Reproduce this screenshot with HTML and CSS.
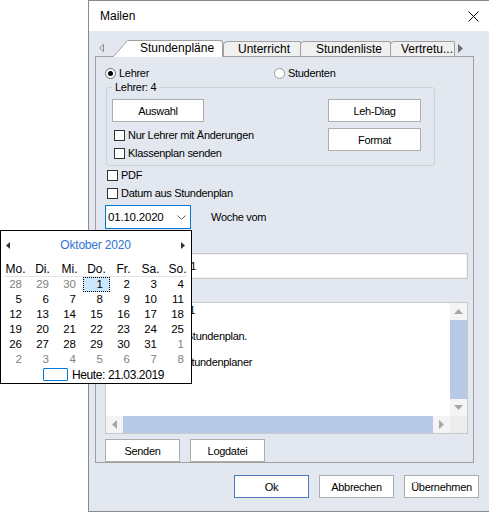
FILE: index.html
```html
<!DOCTYPE html>
<html lang="de">
<head>
<meta charset="utf-8">
<title>Mailen</title>
<link rel="stylesheet" href="styles.css">
</head>
<body>
<div class="window">
  <div class="titlebar">
    <span class="title">Mailen</span>
    <svg class="close" width="11" height="11" viewBox="0 0 11 11"><path d="M0.5 0.5 L10.5 10.5 M10.5 0.5 L0.5 10.5" stroke="#000" stroke-width="1" fill="none"/></svg>
  </div>
  <div class="client">
    <div class="tabs">
      <div class="tab-scroll-left"><svg width="5" height="8" viewBox="0 0 5 8"><polygon points="4.5,0.5 4.5,7.5 0.8,4" fill="none" stroke="#8a8a8a" stroke-width="1"/></svg></div>
      <div class="tab-active">
        <svg class="tab-slant" width="15" height="17" viewBox="0 0 15 17"><polygon points="0,17 14.5,0.5 15,0.5 15,17" fill="#fff"/><line x1="0.5" y1="16.5" x2="14.5" y2="0.5" stroke="#a0a0a0" stroke-width="1"/></svg>
        <div class="tab-active-body">Stundenpläne</div>
      </div>
      <div class="tab tab-unterricht">Unterricht</div>
      <div class="tab tab-liste">Stundenliste</div>
      <div class="tab tab-vert">Vertretu...</div>
      <div class="tab-scroll-right"><svg width="5" height="9" viewBox="0 0 5 9"><polygon points="0,0 5,4.5 0,9" fill="#6e6e6e"/></svg></div>
    </div>
    <div class="panel">
      <div class="radio-row">
        <div class="radio radio-lehrer"><span class="radio-dot on"></span><span>Lehrer</span></div>
        <div class="radio"><span class="radio-dot"></span><span>Studenten</span></div>
      </div>
      <fieldset class="group">
        <legend>Lehrer: 4</legend>
        <div class="group-body">
          <div class="group-left">
            <div class="btn btn-auswahl">Auswahl</div>
            <div class="check-row in-group first"><span class="check"></span><span>Nur Lehrer mit Änderungen</span></div>
            <div class="check-row in-group"><span class="check"></span><span>Klassenplan senden</span></div>
          </div>
          <div class="group-right">
            <div class="btn btn-side">Leh-Diag</div>
            <div class="btn btn-side">Format</div>
          </div>
        </div>
      </fieldset>
      <div class="check-row outer"><span class="check"></span><span>PDF</span></div>
      <div class="check-row outer"><span class="check"></span><span>Datum aus Stundenplan</span></div>
      <div class="date-row">
        <div class="date-picker">
          <span>01.10.2020</span>
          <svg width="9" height="5" viewBox="0 0 9 5"><polyline points="0.5,0.5 4.5,4.5 8.5,0.5" fill="none" stroke="#5a5a5a" stroke-width="1"/></svg>
        </div>
        <span class="date-label">Woche vom</span>
      </div>
      <div class="field-label">Betreff:</div>
      <div class="field">Stundenplan für %1</div>
      <div class="field-label label-text">Text:</div>
      <div class="memo">
        <div class="memo-text"><span class="line-first">Sehr geehrte(r) %1</span>

hier ist Ihr neuer Stundenplan.

Viele Grüße, Ihr Stundenplaner</div>
        <div class="vscroll">
          <div class="sb-btn"><svg width="9" height="5" viewBox="0 0 9 5"><polygon points="0,5 4.5,0 9,5" fill="#a6a6a6"/></svg></div>
          <div class="sb-thumb"></div>
          <div class="sb-btn"><svg width="9" height="5" viewBox="0 0 9 5"><polygon points="0,0 4.5,5 9,0" fill="#a6a6a6"/></svg></div>
        </div>
        <div class="hscroll">
          <div class="sb-btn"><svg width="5" height="9" viewBox="0 0 5 9"><polygon points="5,0 0,4.5 5,9" fill="#a6a6a6"/></svg></div>
          <div class="sb-thumb"></div>
          <div class="sb-btn"><svg width="5" height="9" viewBox="0 0 5 9"><polygon points="0,0 5,4.5 0,9" fill="#a6a6a6"/></svg></div>
        </div>
        <div class="sb-corner"></div>
      </div>
      <div class="panel-buttons">
        <div class="btn btn-75">Senden</div>
        <div class="btn btn-75">Logdatei</div>
      </div>
    </div>
    <div class="dialog-buttons">
      <div class="btn btn-75 btn-default">Ok</div>
      <div class="btn btn-75">Abbrechen</div>
      <div class="btn btn-75">Übernehmen</div>
    </div>
  </div>
</div>

<div class="calendar">
  <div class="cal-head">
    <svg width="4" height="7" viewBox="0 0 4 7"><polygon points="4,0 0,3.5 4,7" fill="#333"/></svg>
    <span class="cal-title">Oktober 2020</span>
    <svg width="4" height="7" viewBox="0 0 4 7"><polygon points="0,0 4,3.5 0,7" fill="#333"/></svg>
  </div>
  <div class="cal-dow">
    <span>Mo.</span><span>Di.</span><span>Mi.</span><span>Do.</span><span>Fr.</span><span>Sa.</span><span>So.</span>
  </div>
  <div class="cal-sep"></div>
  <div class="cal-days">
    <span class="other">28</span><span class="other">29</span><span class="other">30</span><span class="sel">1</span><span>2</span><span>3</span><span>4</span>
    <span>5</span><span>6</span><span>7</span><span>8</span><span>9</span><span>10</span><span>11</span>
    <span>12</span><span>13</span><span>14</span><span>15</span><span>16</span><span>17</span><span>18</span>
    <span>19</span><span>20</span><span>21</span><span>22</span><span>23</span><span>24</span><span>25</span>
    <span>26</span><span>27</span><span>28</span><span>29</span><span>30</span><span>31</span><span class="other">1</span>
    <span class="other">2</span><span class="other">3</span><span class="other">4</span><span class="other">5</span><span class="other">6</span><span class="other">7</span><span class="other">8</span>
  </div>
  <div class="cal-today">
    <span class="today-box"></span>
    <span class="today-text">Heute: 21.03.2019</span>
  </div>
</div>
</body>
</html>
```

FILE: styles.css
```css
html, body {
  margin: 0;
  padding: 0;
}

body {
  width: 489px;
  height: 513px;
  overflow: hidden;
  position: relative;
  background: #ffffff;
  font-family: "Liberation Sans", Arial, sans-serif;
  font-size: 11px;
  color: #000;
  letter-spacing: -0.3px;
}

.window {
  margin-left: 88px;
  width: 401px;
  height: 512px;
  box-sizing: border-box;
  border: 1px solid #8a8a8a;
  border-right: none;
  display: flex;
  flex-direction: column;
}

.titlebar {
  height: 30px;
  flex: none;
  background: #fff;
  display: flex;
  align-items: center;
  justify-content: space-between;
  padding: 0 10px 0 11px;
  font-size: 12px;
  letter-spacing: 0;
}

.close {
  display: block;
}

.client {
  flex: 1;
  background: #e3e8f0;
  padding: 9px 10px 9px 6px;
  display: flex;
  flex-direction: column;
}

/* Tabs */
.tabs {
  height: 16px;
  flex: none;
  display: flex;
  align-items: flex-end;
  font-size: 12px;
  letter-spacing: 0;
}

.tab-scroll-left {
  width: 18px;
  height: 16px;
  box-sizing: border-box;
  padding-left: 4px;
  display: flex;
  align-items: center;
}

.tab-scroll-left svg,
.tab-scroll-right svg {
  display: block;
}

.tab-active {
  display: flex;
  height: 17px;
  margin-bottom: -1px;
  position: relative;
  z-index: 1;
}

.tab-slant {
  display: block;
}

.tab-active-body {
  width: 95px;
  box-sizing: border-box;
  background: #fff;
  border-top: 1px solid #a0a0a0;
  border-right: 1px solid #a0a0a0;
  border-top-right-radius: 3px;
  padding-left: 12px;
  line-height: 15px;
}

.tab {
  height: 15px;
  box-sizing: border-box;
  border: 1px solid #a0a0a0;
  border-bottom: none;
  border-top-left-radius: 5px 4px;
  border-top-right-radius: 2px;
  background: #f0f0f0;
  line-height: 14px;
  white-space: nowrap;
  overflow: hidden;
}

.tab-unterricht {
  width: 78px;
  padding-left: 14px;
}

.tab-liste {
  width: 91px;
  margin-left: -1px;
  padding-left: 15px;
}

.tab-vert {
  width: 65px;
  margin-left: -1px;
  padding-left: 10px;
}

.tab-scroll-right {
  margin-left: 3px;
  height: 16px;
  display: flex;
  align-items: center;
}

/* Panel */
.panel {
  width: 379px;
  box-sizing: border-box;
  border: 1px solid #a0a0a0;
  display: flex;
  flex-direction: column;
  align-items: flex-start;
}

.radio-row {
  margin: 8px 0 0 9px;
  height: 16px;
  display: flex;
  align-items: center;
}

.radio {
  display: flex;
  align-items: center;
  gap: 3px;
}

.radio-lehrer {
  width: 169px;
}

.radio-dot {
  width: 11px;
  height: 11px;
  box-sizing: border-box;
  border-radius: 50%;
  border: 1px solid #9a9a9a;
  background: #fff;
  display: flex;
  align-items: center;
  justify-content: center;
}

.radio-dot.on {
  border-color: #6a6a6a;
}

.radio-dot.on::after {
  content: "";
  width: 5px;
  height: 5px;
  border-radius: 50%;
  background: #000;
}

.group {
  margin: 0 0 0 10px;
  width: 329px;
  min-width: 0;
  box-sizing: border-box;
  border: 1px solid #cdd2d9;
  border-radius: 3px;
  padding: 5px 13px 3px 5px;
}

.group legend {
  padding: 0 3px;
  line-height: 13px;
}

.group-body {
  display: flex;
  justify-content: space-between;
}

.group-right {
  display: flex;
  flex-direction: column;
  gap: 6px;
}

.btn {
  box-sizing: border-box;
  height: 23px;
  border: 1px solid #adadad;
  background: #fff;
  display: flex;
  align-items: center;
  justify-content: center;
  white-space: nowrap;
}

.btn-auswahl {
  width: 92px;
}

.btn-side {
  width: 93px;
}

.btn-75 {
  width: 75px;
}

.btn-default {
  border-color: #4d79b9;
}

.check-row {
  height: 18px;
  display: flex;
  align-items: center;
  gap: 3px;
  white-space: nowrap;
}

.check-row.in-group {
  margin-left: 2px;
}

.check-row.first {
  margin-top: 4px;
}

.check-row.outer {
  margin-left: 11px;
}

.check {
  width: 11px;
  height: 11px;
  box-sizing: border-box;
  border: 1px solid #333;
  background: #fff;
  flex: none;
}

.date-row {
  margin: 3px 0 0 9px;
  display: flex;
  align-items: center;
}

.date-picker {
  width: 86px;
  height: 24px;
  box-sizing: border-box;
  border: 1px solid #0078d7;
  background: #fff;
  display: flex;
  align-items: center;
  justify-content: space-between;
  padding: 0 4px 0 2px;
  font-size: 11.5px;
  letter-spacing: -0.2px;
}

.date-picker svg {
  display: block;
}

.date-label {
  margin-left: 20px;
}

.field-label {
  margin: 6px 0 0 9px;
  height: 14px;
  line-height: 14px;
}

.field {
  margin: 4px 0 0 9px;
  width: 363px;
  height: 26px;
  box-sizing: border-box;
  border: 1px solid #c9c9c9;
  box-shadow: inset 0 0 0 1px #f2f2f2;
  background: #fff;
  padding: 0 3px;
  line-height: 24px;
  white-space: nowrap;
  letter-spacing: -0.55px;
}

.memo {
  margin: 3px 0 0 9px;
  width: 363px;
  height: 132px;
  box-sizing: border-box;
  border: 1px solid #c9c9c9;
  background: #fff;
  display: grid;
  grid-template-columns: 1fr 17px;
  grid-template-rows: 1fr 17px;
}

.memo-text {
  padding: 1px 3px;
  line-height: 13px;
  white-space: pre;
  overflow: hidden;
}

.line-first {
  letter-spacing: -0.42px;
}

.vscroll {
  display: grid;
  grid-template-rows: 17px 1fr 17px;
  background: #f0f0f0;
}

.hscroll {
  display: grid;
  grid-template-columns: 17px 1fr 17px;
  background: #f0f0f0;
}

.sb-btn {
  display: flex;
  align-items: center;
  justify-content: center;
  background: #f4f4f4;
}

.sb-btn svg {
  display: block;
}

.sb-thumb {
  background: #b7c9e6;
}

.sb-corner {
  background: #ececee;
}

.panel-buttons {
  margin: 5px 0 0 9px;
  display: flex;
  gap: 10px;
}

.dialog-buttons {
  margin-top: 12px;
  display: flex;
  justify-content: flex-end;
  gap: 10px;
}

/* Calendar popup */
.calendar {
  position: absolute;
  left: 0;
  top: 230px;
  width: 192px;
  height: 154px;
  box-sizing: border-box;
  border: 1px solid #000;
  background: #fff;
  font-size: 12px;
  letter-spacing: 0;
  display: flex;
  flex-direction: column;
}

.cal-head {
  margin-top: 6px;
  height: 16px;
  padding: 0 6px 0 5px;
  display: flex;
  align-items: center;
  justify-content: space-between;
}

.cal-head svg {
  display: block;
}

.cal-title {
  color: #2f74d6;
  letter-spacing: -0.2px;
}

.cal-dow {
  margin: 9px 0 0 1px;
  height: 14px;
  line-height: 14px;
  display: grid;
  grid-template-columns: repeat(7, 27px);
}

.cal-dow span {
  text-align: center;
}

.cal-sep {
  height: 1px;
  margin: 0 5px 0 3px;
  background: #e4e4e4;
}

.cal-days {
  margin-left: 1px;
  display: grid;
  grid-template-columns: repeat(7, 27px);
  grid-auto-rows: 15px;
  font-size: 11.5px;
  line-height: 15px;
}

.cal-days span {
  text-align: right;
  padding-right: 7px;
  box-sizing: border-box;
}

.cal-days .other {
  color: #808080;
}

.cal-days .sel {
  background: #cce8ff;
  outline: 1px dotted #000;
  outline-offset: -1px;
}

.cal-today {
  margin-top: 1px;
  height: 13px;
  padding-left: 42px;
  display: flex;
  align-items: center;
  gap: 4px;
}

.today-box {
  width: 25px;
  height: 13px;
  box-sizing: border-box;
  border: 1px solid #0078d7;
  border-radius: 1px;
}

.today-text {
  letter-spacing: -0.4px;
}
```
